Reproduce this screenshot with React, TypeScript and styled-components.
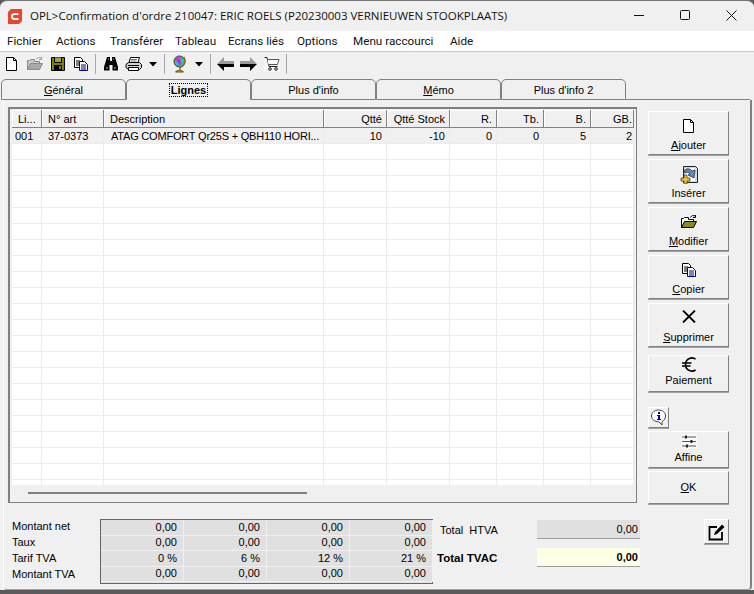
import React from 'react';
import styled, { createGlobalStyle } from 'styled-components';

const GlobalStyle = createGlobalStyle`
  html, body {
    margin: 0;
    padding: 0;
    width: 754px;
    height: 594px;
    overflow: hidden;
    background: #5a5a5a;
  }
  * { box-sizing: border-box; }
`;

const columns = '30px 62px 220px 63px 63px 47px 47px 47px 43px';

const headers = [
  { label: 'Li...', right: false },
  { label: 'N° art', right: false },
  { label: 'Description', right: false },
  { label: 'Qtté', right: true },
  { label: 'Qtté Stock', right: true },
  { label: 'R.', right: true },
  { label: 'Tb.', right: true },
  { label: 'B.', right: true },
  { label: 'GB.', right: true },
];

const firstRow = ['001', '37-0373', 'ATAG COMFORT Qr25S + QBH110 HORI...', '10', '-10', '0', '0', '5', '2'];

const totals = [
  { label: 'Montant net', values: ['0,00', '0,00', '0,00', '0,00'] },
  { label: 'Taux', values: ['0,00', '0,00', '0,00', '0,00'] },
  { label: 'Tarif TVA', values: ['0 %', '6 %', '12 %', '21 %'] },
  { label: 'Montant TVA', values: ['0,00', '0,00', '0,00', '0,00'] },
];

const NewIcon = () => (
  <svg width="16" height="16" viewBox="0 0 16 16">
    <path d="M2.500 1.500h7l3 3v10h-10z" fill="#fff" stroke="#000" />
    <path d="M9.500 1.500v3h3" fill="none" stroke="#000" />
  </svg>
);

const FolderIcon = ({ disabled = false }: { disabled?: boolean }) => (
  <svg width="18" height="16" viewBox="0 0 18 16">
    <path d="M1.500 13.500v-9h2l1-1h4v2h5v2" fill={disabled ? '#c8c8c8' : '#fff'} stroke={disabled ? '#8a8a8a' : '#000'} />
    <path d="M1.500 13.500l3-6h12l-3 6z" fill={disabled ? '#a8a8a8' : '#8c8c10'} stroke={disabled ? '#8a8a8a' : '#000'} />
    <path d="M10.500 3.500c1-2 3-2.500 4.500-1.500M15.500 1v2.500h-2.500" fill="none" stroke={disabled ? '#9a9a9a' : '#000'} />
  </svg>
);

const SaveIcon = () => (
  <svg width="16" height="16" viewBox="0 0 16 16">
    <path d="M1.500 1.500h13v13h-13z" fill="#808000" stroke="#000" />
    <path d="M4.500 1.500v5h7v-5" fill="#a0a040" stroke="#000" />
    <path d="M4 9h8v5.500H4z" fill="#000" />
    <path d="M9 10h2v3H9z" fill="#808000" />
  </svg>
);

const CopyIcon = () => (
  <svg width="16" height="16" viewBox="0 0 16 16">
    <path d="M1.500 1.500h6l2 2v8h-8z" fill="#fff" stroke="#000" />
    <path d="M3 5h4M3 7h4M3 9h3" stroke="#000" />
    <path d="M6.500 5.500h5l3 3v6h-8z" fill="#fff" stroke="#000080" />
    <path d="M8 9h5M8 11h5M8 13h5" stroke="#000080" />
  </svg>
);

const BinocularsIcon = () => (
  <svg width="16" height="16" viewBox="0 0 16 16">
    <path d="M4 1h3v4h2V1h3l3 10v3.500H9.500V9h-3v5.500H1V11z" fill="#000" />
    <path d="M3 12h2M11 12h2M5 3h1M11 3h-1" stroke="#bbb" />
  </svg>
);

const PrinterIcon = () => (
  <svg width="17" height="16" viewBox="0 0 17 16">
    <path d="M5.500 1.500h9l-1.500 5h-9z" fill="#fff" stroke="#000" />
    <path d="M6 3.500h6M5.500 5h6" stroke="#777" />
    <path d="M3.500 6.500h11l2 2v3l-2 2h-11l-2.500-2v-3z" fill="#d0d0d0" stroke="#000" />
    <path d="M3 9.500h11" stroke="#000" />
    <path d="M3.500 11.500h10v3h-10z" fill="#fff" stroke="#000" />
  </svg>
);

const GlobeIcon = () => (
  <svg width="14" height="18" viewBox="0 0 14 18">
    <circle cx="6.500" cy="6.500" r="5.500" fill="#22c6c6" stroke="#3c3c00" />
    <path d="M3 3l3-2 3 3-2 2 2 3-3 2-1-4-3-1z" fill="#c040d0" />
    <path d="M5 5l2 1-1 2z" fill="#3838c0" />
    <path d="M11 2c2 4 1 8-3 10M7 12v3" fill="none" stroke="#8c7400" strokeWidth="1.500" />
    <path d="M2.500 17c1-2 7-2 8 0z" fill="#e0c400" stroke="#5c4c00" />
  </svg>
);

const CaretIcon = () => (
  <svg width="8" height="5" viewBox="0 0 8 5" style={{ display: 'block' }}>
    <path d="M0 0h8L4 4.500z" fill="#000" />
  </svg>
);

const ArrowIcon = ({ flip = false }: { flip?: boolean }) => (
  <svg width="17" height="14" viewBox="0 0 17 14" style={{ transform: flip ? 'scaleX(-1)' : undefined }}>
    <path d="M0 7l7-7v4h10v3H0z" fill="#9a9a9a" />
    <path d="M0 7h17v3H7v4z" fill="#000" />
  </svg>
);

const CartIcon = () => (
  <svg width="16" height="16" viewBox="0 0 16 16">
    <path d="M0 1h16v15H0z" fill="#f6f6f6" />
    <path d="M0.500 1.500h2.500l2 9h8.500" fill="none" stroke="#222" />
    <path d="M3.500 3.500h11.500l-1.500 5h-9" fill="#fff" stroke="#555" />
    <circle cx="6" cy="13" r="1.300" fill="none" stroke="#222" />
    <circle cx="12" cy="13" r="1.300" fill="none" stroke="#222" />
  </svg>
);

const InsertIcon = () => (
  <svg width="18" height="18" viewBox="0 0 18 18">
    <path d="M3.500 0.500h12l2 2v14h-14z" fill="#d8d8d8" stroke="#222" />
    <path d="M5 2h10v13H5z" fill="#fff" />
    <path d="M4 5c2-3 6-3 8 0l3-1-1 8-6-3 2-1c-1-2-3-2-5-1z" fill="#5a8ab8" stroke="#102040" strokeWidth="0.700" />
    <path d="M1 12h3V9h3v3h3v3H7v3H4v-3H1z" fill="#e8c040" stroke="#3a2c00" strokeWidth="0.700" />
  </svg>
);

const CrossIcon = () => (
  <svg width="14" height="13" viewBox="0 0 14 13">
    <path d="M1 0.500l12 12M13 0.500l-12 12" stroke="#000" strokeWidth="1.800" />
  </svg>
);

const EuroIcon = () => (
  <svg width="14" height="15" viewBox="0 0 14 15">
    <path d="M13.500 2.200C12 .8 9.500 .6 7.500 1.400 4.800 2.500 3.500 4.800 3.500 7.500s1.300 5 4 6.100c2 .8 4.500 .6 6-.8" fill="none" stroke="#000" strokeWidth="1.600" />
    <path d="M0 6h9.500M0 9h8.500" stroke="#000" strokeWidth="1.300" />
  </svg>
);

const InfoIcon = () => (
  <svg width="17" height="17" viewBox="0 0 17 17">
    <path d="M8.500 1c4 0 7 2.500 7 6 0 2.500-1.500 4.500-3.500 5.500V16l-3-3.200c-4.500 0-7.500-2.500-7.500-5.800 0-3.500 3-6 7-6z" fill="#fff" stroke="#444" />
    <path d="M8 3h2v2H8zM7 6h3v4h1v1H7v-1h1V7H7z" fill="#0000c0" />
  </svg>
);

const SlidersIcon = () => (
  <svg width="16" height="15" viewBox="0 0 16 15">
    <path d="M0 0h16v15H0z" fill="#fafafa" />
    <path d="M1 3h14M1 7.500h14M1 12h14" stroke="#555" />
    <path d="M4 1.500h2v3H4zM9.500 6h2v3h-2zM5 10.500h2v3H5z" fill="#222" />
  </svg>
);

const EditIcon = () => (
  <svg width="18" height="18" viewBox="0 0 18 18">
    <path d="M9 4H1.500v12.500H14V9" fill="none" stroke="#000" strokeWidth="1.800" />
    <path d="M6 12l1-3 7-7.500 2.500 2.500L9 11z" fill="#000" />
  </svg>
);

const AppLogo = () => (
  <svg width="14" height="15" viewBox="0 0 14 15">
    <path d="M3 0h11v12l-3 3H0V3z" fill="#f0442a" />
    <path d="M10.500 5H5.500L4 6.500v2L5.500 10h5" fill="none" stroke="#fff" strokeWidth="2" />
  </svg>
);

export default function App() {
  return (
    <Window>
      <GlobalStyle />
      <TitleBar>
        <AppLogo />
        <Title>OPL&gt;Confirmation d'ordre 210047: ERIC ROELS (P20230003 VERNIEUWEN STOOKPLAATS)</Title>
        <WindowControls>
          <WindowControl>
            <svg width="11" height="11" viewBox="0 0 11 11"><path d="M0 5.500h10" stroke="#111" /></svg>
          </WindowControl>
          <WindowControl>
            <svg width="11" height="11" viewBox="0 0 11 11"><rect x="0.500" y="0.500" width="9" height="9" rx="1" fill="none" stroke="#111" /></svg>
          </WindowControl>
          <WindowControl>
            <svg width="11" height="11" viewBox="0 0 11 11"><path d="M0.500 0.500l10 10M10.500 0.500l-10 10" stroke="#111" /></svg>
          </WindowControl>
        </WindowControls>
      </TitleBar>

      <MenuBar>
        {['Fichier', 'Actions', 'Transférer', 'Tableau', 'Ecrans liés', 'Options', 'Menu raccourci', 'Aide'].map(item => (
          <MenuItem key={item}>{item}</MenuItem>
        ))}
      </MenuBar>

      <Toolbar>
        <ToolIcon><NewIcon /></ToolIcon>
        <ToolIcon><FolderIcon disabled /></ToolIcon>
        <ToolIcon><SaveIcon /></ToolIcon>
        <ToolIcon><CopyIcon /></ToolIcon>
        <ToolSeparator />
        <ToolIcon><BinocularsIcon /></ToolIcon>
        <ToolIcon><PrinterIcon /></ToolIcon>
        <ToolCaret><CaretIcon /></ToolCaret>
        <ToolSeparator />
        <ToolIcon><GlobeIcon /></ToolIcon>
        <ToolCaret><CaretIcon /></ToolCaret>
        <ToolSeparator />
        <ToolIcon><ArrowIcon /></ToolIcon>
        <ToolIcon><ArrowIcon flip /></ToolIcon>
        <ToolIcon><CartIcon /></ToolIcon>
        <ToolSeparator />
      </Toolbar>

      <TabStrip>
        <Tab><u>G</u>énéral</Tab>
        <Tab $active><FocusLabel>Lignes</FocusLabel></Tab>
        <Tab>Plus d'info</Tab>
        <Tab><u>M</u>émo</Tab>
        <Tab>Plus d'info 2</Tab>
        <TabFiller />
      </TabStrip>

      <Panel>
        <UpperArea>
          <GridFrame>
            <GridScroller>
              <HeaderRow>
                {headers.map((h, i) => (
                  <HeaderCell key={h.label} $right={h.right} $last={i === headers.length - 1}>{h.label}</HeaderCell>
                ))}
              </HeaderRow>
              <DataRow $filled>
                {firstRow.map((value, i) => (
                  <DataCell
                    key={i}
                    $right={headers[i].right}
                    $last={i === firstRow.length - 1}
                    $inset={i === 0 ? 3 : i === 2 ? 7 : 6}
                    $tight={i === 2}
                  >
                    {value}
                  </DataCell>
                ))}
              </DataRow>
              {Array.from({ length: 22 }).map((_, r) => (
                <DataRow key={r}>
                  {headers.map(h => <DataCell key={h.label} $right={h.right} />)}
                </DataRow>
              ))}
            </GridScroller>
            <ScrollTrack>
              <ScrollThumb />
            </ScrollTrack>
          </GridFrame>

          <ButtonColumn>
            <ActionButton><NewIcon /><span><u>A</u>jouter</span></ActionButton>
            <ActionButton><InsertIcon /><span>Insérer</span></ActionButton>
            <ActionButton><FolderIcon /><span><u>M</u>odifier</span></ActionButton>
            <ActionButton><CopyIcon /><span><u>C</u>opier</span></ActionButton>
            <ActionButton><CrossIcon /><span><u>S</u>upprimer</span></ActionButton>
            <PayButton><EuroIcon /><span>Paiement</span></PayButton>
            <InfoButton><InfoIcon /></InfoButton>
            <AffineButton><SlidersIcon /><span>Affine</span></AffineButton>
            <OkButton><span><u>O</u>K</span></OkButton>
          </ButtonColumn>
        </UpperArea>

        <LowerArea>
          <TotalLabels>
            {totals.map(t => <TotalLabel key={t.label}>{t.label}</TotalLabel>)}
          </TotalLabels>
          <TotalsTable>
            {totals.map(t => (
              <TotalsRow key={t.label}>
                {t.values.map((v, i) => <TotalsCell key={i}>{v}</TotalsCell>)}
              </TotalsRow>
            ))}
          </TotalsTable>
          <SummaryBlock>
            <SummaryRow>
              <SummaryLabel>Total&nbsp; HTVA</SummaryLabel>
              <SummaryField>0,00</SummaryField>
            </SummaryRow>
            <SummaryRow>
              <SummaryLabel $strong>Total TVAC</SummaryLabel>
              <SummaryField $strong>0,00</SummaryField>
            </SummaryRow>
          </SummaryBlock>
          <EditButton><EditIcon /></EditButton>
        </LowerArea>
      </Panel>
    </Window>
  );
}

const uiFont = `"Liberation Sans", Arial, sans-serif`;

const Window = styled.div`
  width: 754px;
  height: 590px;
  display: flex;
  flex-direction: column;
  background: #f0f0f0;
  border-top: 1px solid #777;
  border-radius: 7px 7px 0 0;
  overflow: hidden;
  font-family: ${uiFont};
  font-size: 11px;
  color: #000;
`;

const TitleBar = styled.div`
  height: 30px;
  flex: none;
  display: flex;
  align-items: center;
  padding-left: 8px;
`;

const Title = styled.div`
  margin-left: 8px;
  padding-bottom: 2px;
  font-family: "Open Sans", "Noto Sans", sans-serif;
  font-size: 11.5px;
  color: #111;
  white-space: nowrap;
`;

const WindowControls = styled.div`
  margin-left: auto;
  display: flex;
  height: 100%;
  padding-bottom: 2px;
`;

const WindowControl = styled.div`
  width: 46px;
  display: flex;
  align-items: center;
  justify-content: center;
`;

const MenuBar = styled.div`
  height: 20px;
  flex: none;
  display: grid;
  grid-template-columns: 49px 54px 65px 53px 69px 56px 97px auto;
  align-items: center;
  padding: 0 0 1px 7px;
  background: #fff;
  font-family: Roboto, "Open Sans", sans-serif;
  font-size: 11.7px;
  color: #111;
`;

const MenuItem = styled.span`
  white-space: nowrap;
`;

const Toolbar = styled.div`
  height: 28px;
  flex: none;
  display: flex;
  align-items: flex-start;
  padding-top: 1px;
  border-top: 1px solid #c8c8c8;
`;

const ToolIcon = styled.div`
  width: 23px;
  height: 22px;
  display: flex;
  align-items: center;
  justify-content: center;
`;

const ToolCaret = styled.div`
  width: 16px;
  height: 22px;
  display: flex;
  align-items: center;
  padding-left: 4px;
`;

const ToolSeparator = styled.div`
  width: 1px;
  height: 20px;
  margin: 1px 3px 0;
  background: #a8a8a8;
`;

const TabStrip = styled.div`
  height: 21px;
  flex: none;
  display: flex;
  align-items: flex-start;
  padding-left: 1px;
`;

const Tab = styled.div<{ $active?: boolean }>`
  width: 125px;
  height: 21px;
  display: flex;
  align-items: center;
  justify-content: center;
  border: 1px solid #808080;
  border-bottom: ${({ $active }) => ($active ? 'none' : '1px solid #808080')};
  border-radius: 5px 5px 0 0;
  background: #f0f0f0;
  font-weight: ${({ $active }) => ($active ? 700 : 400)};
`;

const TabFiller = styled.div`
  flex: 1;
  height: 21px;
  margin-right: 4px;
  border-bottom: 1px solid #808080;
`;

const FocusLabel = styled.span`
  outline: 1px dotted #000;
  padding: 0 1px;
  line-height: 12px;
`;

const Panel = styled.div`
  flex: 1;
  display: flex;
  flex-direction: column;
  margin: 0 2px 0 3px;
  border-right: 2px solid #808080;
  border-left: 1px solid #fff;
  border-bottom: 1px solid #a0a0a0;
  border-radius: 0 0 4px 4px;
  padding-left: 4px;
`;

const UpperArea = styled.div`
  display: flex;
  padding-top: 7px;
`;

const GridFrame = styled.div`
  width: 629px;
  height: 396px;
  flex: none;
  display: flex;
  flex-direction: column;
  border: 2px solid #808080;
  border-right-width: 1px;
  border-bottom-width: 1px;
  padding: 1px 2px 0;
  background: #f0f0f0;
`;

const GridScroller = styled.div`
  height: 375px;
  flex: none;
  overflow: hidden;
  background: #fff;
`;

const HeaderRow = styled.div`
  height: 18px;
  display: grid;
  grid-template-columns: ${columns};
`;

const HeaderCell = styled.div<{ $right: boolean; $last?: boolean }>`
  padding: 0 ${({ $last }) => ($last ? '1px' : '4px')} 0 6px;
  line-height: 18px;
  background: #f0f0f0;
  border-right: 1px solid #808080;
  border-bottom: 1px solid #808080;
  box-shadow: inset 1px 1px 0 #fff;
  text-align: ${({ $right }) => ($right ? 'right' : 'left')};
  white-space: nowrap;
  overflow: hidden;
`;

const DataRow = styled.div<{ $filled?: boolean }>`
  height: 16px;
  display: grid;
  grid-template-columns: ${columns};
  background: ${({ $filled }) => ($filled ? '#f0f0f0' : '#fff')};
`;

const DataCell = styled.div<{ $right: boolean; $last?: boolean; $inset?: number; $tight?: boolean }>`
  padding: 0 ${({ $last }) => ($last ? '1px' : '4px')} 0 ${({ $inset }) => $inset ?? 6}px;
  line-height: 16px;
  letter-spacing: ${({ $tight }) => ($tight ? '-0.2px' : 'normal')};
  border-right: 1px solid #ececec;
  border-bottom: 1px solid #ececec;
  text-align: ${({ $right }) => ($right ? 'right' : 'left')};
  white-space: nowrap;
  overflow: hidden;
`;

const ScrollTrack = styled.div`
  flex: 1;
  padding: 7px 0 0 16px;
`;

const ScrollThumb = styled.div`
  width: 279px;
  height: 2px;
  background: #808080;
`;

const ButtonColumn = styled.div`
  margin-left: 11px;
  width: 81px;
  flex: none;
  display: flex;
  flex-direction: column;
  padding-top: 4px;
`;

const RaisedButton = styled.div`
  background: #f0f0f0;
  border: 1px solid;
  border-color: #fff #808080 #808080 #fff;
  box-shadow: 0 1px 0 #a0a0a0;
`;

const ActionButton = styled(RaisedButton)`
  height: 44px;
  margin-bottom: 4px;
  display: flex;
  flex-direction: column;
  align-items: center;
  justify-content: space-between;
  padding: 6px 0 3px;
`;

const PayButton = styled(RaisedButton)`
  height: 37px;
  margin-top: 4px;
  padding-top: 1px;
  display: flex;
  flex-direction: column;
  align-items: center;
  gap: 2px;
`;

const InfoButton = styled(RaisedButton)`
  width: 21px;
  height: 21px;
  margin-top: 15px;
  display: flex;
  align-items: center;
  justify-content: center;
`;

const AffineButton = styled(RaisedButton)`
  height: 37px;
  margin-top: 3px;
  display: flex;
  flex-direction: column;
  align-items: center;
  justify-content: space-between;
  padding: 2px 0 4px;
`;

const OkButton = styled(RaisedButton)`
  height: 33px;
  margin-top: 3px;
  padding-bottom: 1px;
  display: flex;
  align-items: center;
  justify-content: center;
`;

const LowerArea = styled.div`
  display: flex;
  margin-top: 15px;
  padding-left: 4px;
`;

const TotalLabels = styled.div`
  width: 88px;
  flex: none;
`;

const TotalLabel = styled.div`
  height: 16px;
  line-height: 14px;
`;

const TotalsTable = styled.div`
  width: 333px;
  height: 65px;
  flex: none;
  border: 1px solid #666;
  background: #e0e0e0;
`;

const TotalsRow = styled.div`
  height: 15.4px;
  display: grid;
  grid-template-columns: repeat(4, 83px);
`;

const TotalsCell = styled.div`
  padding-right: 6px;
  line-height: 15px;
  text-align: right;
  border-right: 1px solid #f0f0f0;
  border-bottom: 1px solid #f0f0f0;
`;

const SummaryBlock = styled.div`
  width: 207px;
  flex: none;
  margin-left: 4px;
  display: flex;
  flex-direction: column;
  gap: 9px;
  padding-top: 1px;
`;

const SummaryRow = styled.div`
  display: flex;
  align-items: center;
  height: 19px;
`;

const SummaryLabel = styled.div<{ $strong?: boolean }>`
  width: 100px;
  padding: 1px 0 0 ${({ $strong }) => ($strong ? '0' : '3px')};
  font-size: ${({ $strong }) => ($strong ? '11.5px' : '11px')};
  font-weight: ${({ $strong }) => ($strong ? 700 : 400)};
  white-space: nowrap;
`;

const SummaryField = styled.div<{ $strong?: boolean }>`
  width: 103px;
  height: 19px;
  padding-right: 2px;
  line-height: 18px;
  text-align: right;
  font-weight: ${({ $strong }) => ($strong ? 700 : 400)};
  background: ${({ $strong }) => ($strong ? '#ffffe6' : '#e0e0e0')};
  border-bottom: 1px solid #a0a0a0;
`;

const EditButton = styled(RaisedButton)`
  width: 25px;
  height: 25px;
  margin-left: 60px;
  display: flex;
  align-items: center;
  justify-content: center;
`;
